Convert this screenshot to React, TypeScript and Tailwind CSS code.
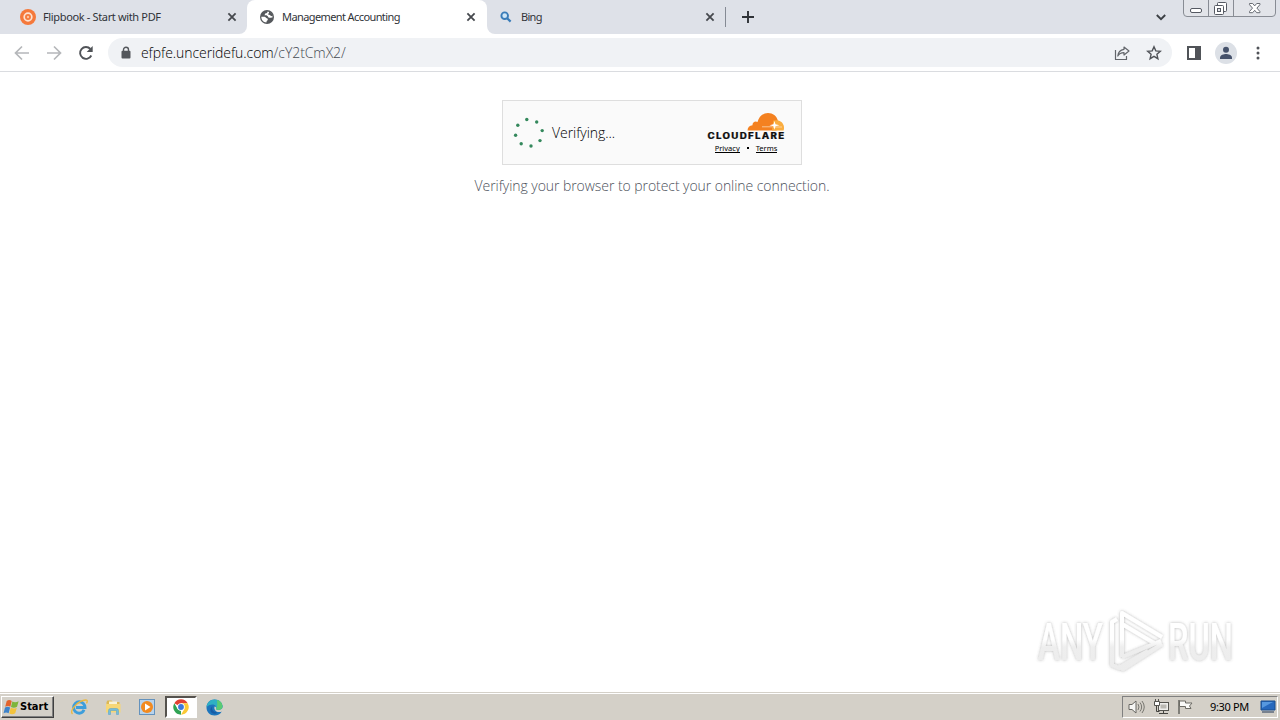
import type { ReactNode } from "react";
import clsx from "clsx";

const ui = "font-['Noto_Sans','Open_Sans',sans-serif]";

function CloseIcon() {
  return (
    <svg width="10" height="10" viewBox="0 0 10 10" className="shrink-0">
      <path d="M1.4 1.4l7.2 7.2M8.6 1.4L1.4 8.6" stroke="#45484d" strokeWidth="1.8" />
    </svg>
  );
}

function FlipbookIcon() {
  return (
    <svg width="16" height="16" viewBox="0 0 16 16">
      <circle cx="8" cy="8" r="8" fill="#f5793b" />
      <circle cx="8" cy="8" r="3.8" fill="#f5793b" stroke="#fde3d3" strokeWidth="1.7" />
      <circle cx="8" cy="8" r="1.2" fill="#fbc3a0" />
    </svg>
  );
}

function GlobeIcon() {
  return (
    <svg width="16" height="16" viewBox="0 0 16 16">
      <circle cx="8" cy="8" r="7" fill="#55585c" />
      <path d="M2.3 7.8h3.2c1.2 0 1.4 1.2 2.3 1.5 1 .4 1.2 1 .9 1.8-.3.7-1.200.7-1.300 2.500C4.400 13.300 2.300 11 2.300 7.800z" fill="#fff" />
      <path d="M8.600 2.400c-.2 1.300-.7 1.700-1.800 1.900-.9.200-.6 1.500-1.500 1.800 1.200.8 2.300.2 3.200.8.900.7.500 1.700 1.700 1.900 1.100.2 1.900-.4 3.500-.6C13.700 5.100 11.900 2.800 8.600 2.400z" fill="#fff" />
      <path d="M10 2.500c.2 1.500-.3 2-1.200 2.600.5.900 2 .5 2.600 1.400.5.700 1.200.8 2.500.7C13.700 5 12.200 3.200 10 2.500z" fill="#55585c" />
    </svg>
  );
}

function SearchIcon() {
  return (
    <svg width="12" height="12" viewBox="0 0 12 12">
      <circle cx="4.7" cy="4.7" r="3.3" fill="#cfe6f7" stroke="#3a7cb8" strokeWidth="1.9" />
      <path d="M7.2 7.2l3.4 3.4" stroke="#3a7cb8" strokeWidth="2.2" />
    </svg>
  );
}

interface TabProps {
  icon: ReactNode;
  title: string;
  className: string;
  titleClass: string;
}

function Tab({ icon, title, className, titleClass }: TabProps) {
  return (
    <div className={clsx("flex h-[34px] items-center", className)}>
      {icon}
      <span className={clsx("flex-1 whitespace-nowrap text-[11px] leading-4 text-[#303338]", titleClass)}>{title}</span>
      <CloseIcon />
    </div>
  );
}

function WindowButtons() {
  return (
    <svg width="94" height="17" viewBox="0 0 94 17" className="shrink-0">
      <path d="M.5 0v13q0 3.500 3.500 3.500h85q3.500 0 3.500-3.500V0M25.500 0v16M50.500 0v16" fill="#e2e4e9" stroke="#888c94" />
      <rect x="7.5" y="8.5" width="11" height="4" rx="1.5" fill="#fff" stroke="#555962" />
      <rect x="34.5" y="2.5" width="9" height="9" rx="1" fill="#fff" stroke="#555962" />
      <rect x="31.5" y="5.5" width="9" height="9" rx="1" fill="#fff" stroke="#555962" />
      <rect x="34.5" y="8.5" width="3" height="3" fill="#e2e4e9" stroke="#555962" />
      <path d="M66.500 3.500h3.200l2 2.400 2-2.400h3.200v1.200l-3 3.400 3 3.400v1.200h-3.200l-2-2.400-2 2.400h-3.200v-1.200l3-3.400-3-3.400z" fill="#fff" stroke="#666a72" />
    </svg>
  );
}

function TabStrip() {
  return (
    <div className="flex h-[34px] bg-[#dee1e8]">
      <div className="w-[247px] bg-white">
        <Tab icon={<FlipbookIcon />} title="Flipbook - Start with PDF" className="rounded-br-lg bg-[#dee1e8] pl-5 pr-[10px]" titleClass="ml-[7px] tracking-[-0.35px]" />
      </div>
      <div className="w-[240px] bg-[#dee1e8]">
        <Tab icon={<GlobeIcon />} title="Management Accounting" className="rounded-t-lg bg-white pl-3 pr-[11px]" titleClass="ml-[7px] tracking-[-0.6px]" />
      </div>
      <div className="w-[239px] bg-white">
        <Tab icon={<SearchIcon />} title="Bing" className="rounded-bl-lg bg-[#dee1e8] pl-[13px] pr-[11px]" titleClass="ml-[9px] tracking-[-0.7px]" />
      </div>
      <div className="-ml-px mt-[7px] h-5 w-px bg-[#858a94]" />
      <svg width="12" height="12" viewBox="0 0 12 12" className="ml-4 mt-[11px]">
        <path d="M6 0v12M0 6h12" stroke="#2f3237" strokeWidth="1.9" />
      </svg>
      <div className="flex-1" />
      <svg width="10" height="7" viewBox="0 0 10 7" className="mr-[17px] mt-[14px]">
        <path d="M.8 1L5 5.200 9.200 1" fill="none" stroke="#3c4045" strokeWidth="1.9" />
      </svg>
      <WindowButtons />
      <div className="w-[3px]" />
    </div>
  );
}

function Toolbar() {
  return (
    <div className="flex h-[38px] items-center border-b border-[#dadce0] bg-white pl-[14px]">
      <svg width="16" height="16" viewBox="0 0 16 16">
        <path d="M15 8H2M8 1.500L1.500 8 8 14.500" fill="none" stroke="#b5b7ba" strokeWidth="1.7" />
      </svg>
      <svg width="16" height="16" viewBox="0 0 16 16" className="ml-4">
        <path d="M1 8h13M8 1.500L14.500 8 8 14.500" fill="none" stroke="#b5b7ba" strokeWidth="1.7" />
      </svg>
      <svg width="16" height="16" viewBox="0 0 16 16" className="ml-4">
        <path d="M13.300 10.500A5.900 5.900 0 1 1 12.400 4" fill="none" stroke="#505358" strokeWidth="1.9" />
        <path d="M14.700 1v6H8.700z" fill="#505358" />
      </svg>
      <div className="ml-[14px] flex h-[29px] w-[1064px] items-center rounded-full bg-[#f0f2f5] pl-[13px] pr-[10px]">
        <svg width="10" height="13" viewBox="0 0 10 13">
          <path d="M2.500 6V3.700a2.500 2.500 0 0 1 5 0V6" fill="none" stroke="#54575c" strokeWidth="1.4" />
          <rect x=".5" y="4.8" width="9" height="7.7" rx="1" fill="#54575c" />
        </svg>
        <span className="ml-[10px] flex-1 whitespace-nowrap font-['Open_Sans','Noto_Sans',sans-serif] text-[14px] font-light leading-5 tracking-[-0.07px] text-black">
          efpfe.unceridefu.com<span className="text-[#454a52]">/cY2tCmX2/</span>
        </span>
        <svg width="16" height="16" viewBox="0 0 16 16">
          <path d="M1.500 5v9.500h11V11M10 2l5 4-5 4V7.700C7 7.700 5 8.800 3.800 11c.3-3.600 2.500-6.200 6.200-6.700z" fill="none" stroke="#62656a" strokeWidth="1.2" strokeLinejoin="round" />
        </svg>
        <svg width="16" height="16" viewBox="0 0 16 16" className="ml-4">
          <path d="M8 1.800l1.800 4.100 4.500.4-3.400 3 1 4.400L8 11.400l-3.900 2.300 1-4.400-3.400-3 4.500-.4z" fill="none" stroke="#505358" strokeWidth="1.4" />
        </svg>
      </div>
      <svg width="14" height="14" viewBox="0 0 14 14" className="ml-[15px]">
        <rect x="1" y="1" width="12" height="12" fill="none" stroke="#505358" strokeWidth="2" />
        <path d="M8 1h5v12H8z" fill="#505358" />
      </svg>
      <svg width="22" height="22" viewBox="0 0 22 22" className="ml-[14px]">
        <circle cx="11" cy="11" r="11" fill="#dce0e6" />
        <circle cx="11" cy="7.8" r="3" fill="#46526b" />
        <path d="M5 17v-1.500c0-2.500 4-3.500 6-3.500s6 1 6 3.500V17z" fill="#46526b" />
      </svg>
      <svg width="4" height="14" viewBox="0 0 4 14" className="ml-[19px]">
        <circle cx="2" cy="2" r="1.5" fill="#505358" />
        <circle cx="2" cy="7" r="1.5" fill="#505358" />
        <circle cx="2" cy="12" r="1.5" fill="#505358" />
      </svg>
    </div>
  );
}

const spinnerDots = [
  [13.8, 2.5], [23.7, 5], [29.2, 13.6], [27, 23.6],
  [18, 29], [8.2, 26.8], [2.6, 18.2], [4.8, 8.2],
];

function Spinner() {
  return (
    <svg width="32" height="32" viewBox="0 0 32 32">
      {spinnerDots.map(([x, y]) => (
        <circle key={`${x}-${y}`} cx={x} cy={y} r="1.7" fill="#34885c" />
      ))}
    </svg>
  );
}

function CloudflareBadge() {
  return (
    <div className="flex w-[78px] flex-col items-center">
      <svg width="78" height="30" viewBox="0 0 78 30">
        <path d="M40.500 18.500c0-3 2-5 5-5.200-.2-3 2.700-4.800 5-3.300C52 4.500 56 1 61 1c5 0 8.500 3 9.800 7.300l-1.300 10.200z" fill="#f48120" />
        <path d="M65 18.500l1.300-10 3.700-.2c4 .2 7 3.500 7 7.500 0 1-.1 1.800-.4 2.700z" fill="#faad3f" />
        <path d="M55 14.800h10.500M66 15h9" fill="none" stroke="#fce3c7" strokeWidth=".7" />
        <path d="M67.500 9l1 3.300 4 1-4 1-1 3.500-1-3.500-4-1 4-1z" fill="#fff" />
        <text x="0.5" y="26.800" textLength="78" lengthAdjust="spacingAndGlyphs" fill="#111" stroke="#111" strokeWidth=".2" className="font-['Inter',sans-serif] text-[8.3px] font-extrabold tracking-[1.1px]">CLOUDFLARE</text>
      </svg>
      <div className="flex h-[11px] items-center pt-px text-[7.5px] leading-[9px] text-black">
        <span className="border-b border-black leading-[8px]">Privacy</span>
        <span className="mx-[7px] h-[2px] w-[2px] bg-black" />
        <span className="border-b border-black leading-[8px]">Terms</span>
      </div>
    </div>
  );
}

function Watermark() {
  return (
    <svg width="216" height="80" viewBox="0 0 216 80" className="absolute bottom-[6px] right-8 overflow-visible">
      <defs>
        <linearGradient id="fade" x1="0" y1="0" x2="0" y2="76" gradientUnits="userSpaceOnUse">
          <stop offset=".44" stopColor="#ffffff" />
          <stop offset=".54" stopColor="#eeeeee" />
          <stop offset="1" stopColor="#ebebeb" />
        </linearGradient>
        <filter id="halo" x="-10%" y="-10%" width="120%" height="120%">
          <feDropShadow dx="0" dy="0" stdDeviation="1.6" floodColor="#555" floodOpacity=".44" />
        </filter>
      </defs>
      <g filter="url(#halo)" fill="url(#fade)">
        <text x="6" y="54" textLength="65" lengthAdjust="spacingAndGlyphs" className="font-['Roboto',sans-serif] text-[51px] font-medium">ANY</text>
        <text x="136" y="54" textLength="65" lengthAdjust="spacingAndGlyphs" className="font-['Roboto',sans-serif] text-[51px] font-medium">RUN</text>
        <path d="M90 51V7l40 24M90 18l32 19M129 35L90 51M130 38L91 63l-5-3M85 13l-5 3v43l7 3 29-17" fill="none" stroke="url(#fade)" strokeWidth="4" strokeLinejoin="round" />
      </g>
    </svg>
  );
}

function WindowsFlag() {
  return (
    <svg width="17" height="17" viewBox="0 0 16 16" className="shrink-0">
      <path d="M3.500 1.800c1.800-1.100 3.300-.9 4.700.1L6.900 7.200c-1.500-.9-3.100-.9-4.800.1z" fill="#e3632c" />
      <path d="M8.800 2.300c1.800 1.100 3.700 1 5.900-.2l-1.500 5.200c-2 1.100-3.800 1.100-5.700.2z" fill="#7eb53d" />
      <path d="M1.900 8c1.800-1 3.300-.9 4.800 0l-1.400 5.300c-1.600-.9-3.100-.9-4.800 0z" fill="#3e83ca" />
      <path d="M7.300 8.300c1.900 1 3.600 1 5.700-.1l-1.500 5.300c-1.900 1.100-3.700 1.100-5.600.2z" fill="#f3c33c" />
    </svg>
  );
}

function ExplorerIcon() {
  return (
    <svg width="18" height="18" viewBox="0 0 18 18" className="-ml-px">
      <path d="M14 11.800C13 14.200 11.300 15.200 9.300 15.200a5.700 5.700 0 1 1 5.700-5.700H6" fill="none" stroke="#3e9edb" strokeWidth="2.9" />
      <path d="M2.500 16C-.8 12.500 8 2.500 15.800 2c2-.1 1.500 2 .7 3.300" fill="none" stroke="#edb83c" strokeWidth="1.3" />
    </svg>
  );
}

function FolderIcon() {
  return (
    <svg width="17" height="17" viewBox="0 0 17 17">
      <path d="M1.500 3l1-1.500h4L8 3h6.500v9h-13z" fill="#dcb854" />
      <path d="M4 2.500h8V8H4z" fill="#f8f2d7" />
      <path d="M1 5h14.500v8.500H1z" fill="#f6d777" />
      <path d="M3.500 15.500v-4q0-2 2-2h6q2 0 2 2v4h-2v-4h-6v4z" fill="#75bddc" stroke="#519fc7" strokeWidth=".5" />
    </svg>
  );
}

function MediaIcon() {
  return (
    <svg width="16" height="16" viewBox="0 0 16 16">
      <rect x=".5" y=".5" width="15" height="15" fill="#b8d3ec" stroke="#6492bd" />
      <circle cx="8" cy="8" r="6" fill="#f28a20" />
      <path d="M6 4.500L11.500 8 6 11.500z" fill="#fff" />
    </svg>
  );
}

function ChromeIcon() {
  return (
    <svg width="16" height="16" viewBox="0 0 16 16">
      <circle cx="8" cy="8" r="7.7" fill="#fff" />
      <path d="M8 8L1.330 4.150A7.700 7.700 0 0 1 14.670 4.150H8z" fill="#e14133" />
      <path d="M8 4.150h6.670A7.700 7.700 0 0 1 8 15.700l3.330-5.780z" fill="#fbc934" />
      <path d="M1.330 4.150l3.340 5.770 3.330 1.930L8 15.700A7.700 7.700 0 0 1 1.330 4.150z" fill="#30a354" />
      <circle cx="8" cy="8" r="3.8" fill="#fff" />
      <circle cx="8" cy="8" r="2.9" fill="#3b78dc" />
    </svg>
  );
}

function EdgeIcon() {
  return (
    <svg width="17" height="17" viewBox="0 0 17 17">
      <path d="M.5 8.500C.5 4 4 .5 8.500.5c4.800 0 8 3.500 8 7 0 2.600-2 3.800-4 3.800-1.500 0-2.700-.4-3.100-.9-.5.300 1.200 2.700 3.700 2.700 1 0 2-.3 2.700-.7-1.400 2.500-4 4.100-7.300 4.100-4.500 0-8-3.500-8-8z" fill="#1d75bc" />
      <path d="M.6 8C1 3.500 4.300.5 8.500.5c5 0 8 3.500 8 7 0 3.500-4.800 4.300-6.700 2.700 2-3.700-3.300-7-9.200-2.200z" fill="#2fb0c4" />
      <path d="M11 1.100c3.900.9 5.500 3.700 5.500 6.400 0 3.500-4.800 4.300-6.700 2.700C12 7.500 11 4 11 1.100z" fill="#5bcb73" />
      <path d="M6.500 7.200c-1.500 3.500 1 6 5 6.200-1.500 1.500-4 1.700-5.500.6-2.500-1.800-1.800-5.200.5-6.800z" fill="#175ba5" />
      <path d="M8.600 7.600c1.600.3 2 1.300 1.200 2.600 1.500 1.500 4.400 1.400 6.300-.4v1.700c-1.200 1.300-3.700 1.500-5.300.9-2.200-.8-3-2.800-2.200-4.800z" fill="#d4d0c8" />
    </svg>
  );
}

function Taskbar() {
  return (
    <div className="flex h-7 items-center border-t border-[#d4d0c8] bg-[#d4d0c8] pl-px pr-[2px] pt-px shadow-[inset_0_1px_0_#fff]">
      <div className="flex h-[22px] w-[53px] items-center border border-b-[#404040] border-l-white border-r-[#404040] border-t-white pl-px shadow-[inset_-1px_-1px_0_#808080]">
        <WindowsFlag />
        <span className="whitespace-nowrap font-['DejaVu_Sans_Condensed','DejaVu_Sans',sans-serif] text-[11px] font-bold leading-4 text-black">Start</span>
      </div>
      <div className="ml-[17px] flex items-center">
        <ExplorerIcon />
        <div className="ml-[17px]"><FolderIcon /></div>
        <div className="ml-[17px]"><MediaIcon /></div>
        <div className="ml-[10px] flex h-[22px] w-8 items-center justify-center border-2 border-b-white border-l-[#55524d] border-r-white border-t-[#55524d] bg-white">
          <ChromeIcon />
        </div>
        <div className="ml-[9px]"><EdgeIcon /></div>
      </div>
      <div className="flex-1" />
      <div className="flex h-[22px] w-[156px] items-center border border-b-white border-l-[#808080] border-r-white border-t-[#808080] pl-[5px]">
        <svg width="18" height="16" viewBox="0 0 18 16">
          <path d="M1 5.500h3L8 2v12l-4-3.500H1z" fill="#f6f6f4" stroke="#686762" />
          <path d="M10 5q2 3 0 6M12 3.500q3.300 4.500 0 9M14 2q4.500 6 0 12" fill="none" stroke="#777670" />
        </svg>
        <svg width="17" height="16" viewBox="0 0 17 16" className="ml-[7px]">
          <rect x="5.5" y="3.5" width="10" height="8" fill="#efefec" stroke="#55544f" />
          <rect x="7.5" y="5.5" width="6" height="4" fill="#bbb9b3" />
          <path d="M6 14.500h9M10.500 12v2.500M3.500 6v6.500h3" fill="none" stroke="#44433f" />
          <path d="M1.500 2.500h5v4h-5zM2.500 0v2.500M5.500 0v2.500" fill="#fff" stroke="#55544f" />
        </svg>
        <svg width="17" height="16" viewBox="0 0 17 16" className="ml-[7px]">
          <path d="M2 1v14" stroke="#65645f" strokeWidth="1.5" />
          <path d="M2.500 2h6v2h6.500l-2.500 3 1.500 2.500H8.500v-2h-6z" fill="#fafaf8" stroke="#6c6b65" />
        </svg>
        <span className="ml-[16px] whitespace-nowrap text-[11px] leading-4 tracking-[-0.35px] text-black">9:30 PM</span>
        <svg width="16" height="14" viewBox="0 0 16 14" className="ml-[11px]">
          <path d="M1 1h14v9H1z" fill="#2768bd" stroke="#1b4c8c" />
          <path d="M2 8L13 2H2z" fill="#5798df" />
          <path d="M2 12h12" stroke="#79828f" strokeWidth="2" />
        </svg>
      </div>
    </div>
  );
}

export default function App() {
  return (
    <div className={clsx("flex h-[720px] w-[1280px] flex-col overflow-hidden bg-white", ui)}>
      <TabStrip />
      <Toolbar />
      <main className="relative flex flex-1 flex-col items-center pl-6 pt-7">
        <div className="flex h-[65px] w-[300px] items-center border border-[#dedede] bg-[#fafafa] pl-[10px] pr-[16px]">
          <Spinner />
          <span className="ml-[7px] flex-1 font-['Open_Sans','Noto_Sans',sans-serif] text-[14px] font-light leading-5 tracking-[-0.05px] text-black">Verifying...</span>
          <CloudflareBadge />
        </div>
        <p className="mt-[11px] whitespace-nowrap font-['Open_Sans','Noto_Sans',sans-serif] text-[14px] font-light leading-5 tracking-[-0.06px] text-[#4d525c]">
          Verifying your browser to protect your online connection.
        </p>
        {/* recorder watermark sits over the page corner */}
        <Watermark />
      </main>
      <Taskbar />
    </div>
  );
}
